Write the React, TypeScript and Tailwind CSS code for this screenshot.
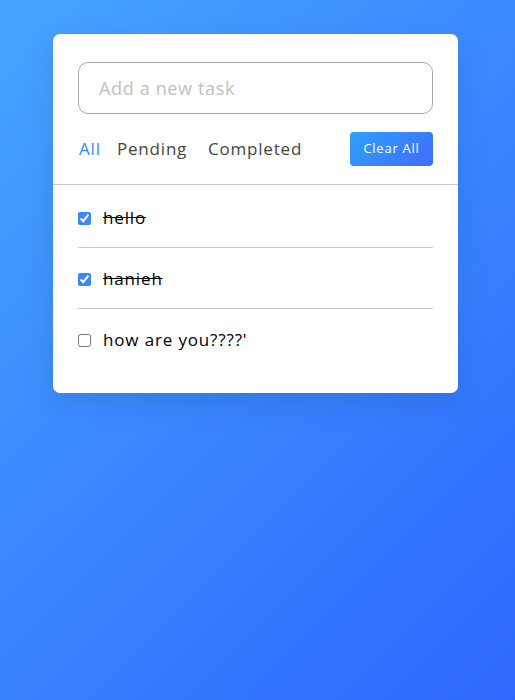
import React from "react";

const tasks = [
  { text: "hello", done: true },
  { text: "hanieh", done: true },
  { text: "how are you????'", done: false },
];

export default function App() {
  return (
    <div
      className="min-h-[700px] w-full bg-[linear-gradient(135deg,#46a4ff,#2e67fe)] pt-[34px]"
      style={{ fontFamily: '"Open Sans", "Noto Sans", sans-serif' }}
    >
      <div className="ml-[53px] w-[405px] rounded-[7px] bg-white pt-[28px] pb-[30px] shadow-[0_10px_30px_rgba(0,0,0,0.1)]">
        <div className="h-[52px] px-[25px]">
          <input
            type="text"
            placeholder="Add a new task"
            className="h-full w-full rounded-[10px] border border-[#aaa] px-[20px] text-[18px] tracking-[0.65px] outline-none placeholder:text-[#bfbfbf]"
          />
        </div>
        <div className="flex items-center justify-between border-b border-[#ccc] px-[25px] py-[18px]">
          <div className="flex items-center pl-[1px] text-[17px] leading-[26px] tracking-[0.8px] text-[#444]">
            <span className="w-[38px] text-[#3C87FF]">All</span>
            <span className="w-[91px]">Pending</span>
            <span>Completed</span>
          </div>
          <button className="h-[34px] w-[83px] rounded-[4px] bg-[linear-gradient(135deg,#1798fb_0%,#2D5CFE_100%)] text-[13px] tracking-[0.75px] text-white opacity-90">
            Clear All
          </button>
        </div>
        <ul className="mt-[20px] pl-[25px] pr-[25px] pb-[10px]">
          {tasks.map((t, i) => (
            <li
              key={i}
              className={
                "flex items-start text-[17px] leading-[26px] tracking-[0.85px] text-black " +
                (i < tasks.length - 1
                  ? "mb-[18px] border-b border-[#ccc] pb-[16px]"
                  : "")
              }
            >
              <input
                type="checkbox"
                defaultChecked={t.done}
                className="mt-[7px] h-[13px] w-[13px] shrink-0 accent-[#3C87FF]"
              />
              <p className={"ml-[12px] " + (t.done ? "line-through" : "")}>
                {t.text}
              </p>
            </li>
          ))}
        </ul>
      </div>
    </div>
  );
}
